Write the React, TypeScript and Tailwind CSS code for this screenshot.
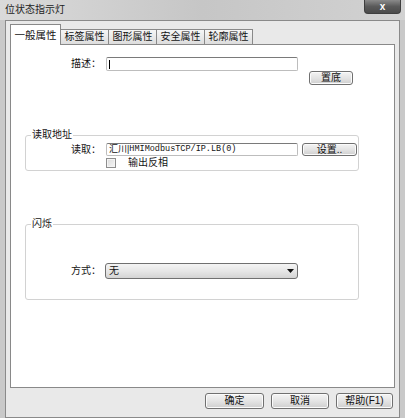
import React from 'react';

const cjk = "font-['Liberation_Sans','Noto_Sans_CJK_SC',sans-serif]";

const btn =
  'flex items-center justify-center rounded-[3px] border border-[#707070] bg-gradient-to-b from-[#f4f4f4] via-[#e4e4e4] to-[#cfcfcf] text-[10px] leading-none text-[#111] shadow-[inset_0_0_0_1px_#fbfbfb]';

function Tab({ label, active }: { label: string; active?: boolean }) {
  if (active) {
    return (
      <div className="relative z-10 -mb-px flex h-[21px] w-[51px] items-center justify-center border border-b-0 border-[#898989] bg-white text-[10.5px] leading-none">
        {label}
      </div>
    );
  }
  return (
    <div className="-ml-px flex h-[15px] w-[49px] items-center justify-center border border-b-0 border-[#898989] bg-gradient-to-b from-[#f6f6f6] to-[#dddddd] text-[10px] leading-none">
      {label}
    </div>
  );
}

function Group({ title, className, children }: { title: string; className: string; children: React.ReactNode }) {
  return (
    <div className={`relative ml-[14px] w-[334px] rounded-[3px] border border-[#d2d2d2] ${className}`}>
      {/* legend sits over the top border */}
      <span className="absolute -top-[7px] left-[5px] bg-white px-[1px] text-[10px] leading-[12px]">{title}</span>
      {children}
    </div>
  );
}

export default function App() {
  return (
    <div className={`flex h-[418px] w-[405px] flex-col overflow-hidden bg-[#c9c9c9] text-[#141414] ${cjk}`}>
      {/* Title bar */}
      <div className="flex h-[20px] bg-gradient-to-r from-[#dadada] via-[#c6c6c6] to-[#d2d2d2]">
        <span className="pl-[5px] pt-[5px] text-[10px] leading-none text-[#222]">位状态指示灯</span>
        <div className="ml-auto mr-[4px] flex h-[14px] w-[37px] items-center justify-center rounded-b-[4px] border border-t-0 border-[#3e3e3e] bg-gradient-to-b from-[#8a8a8a] via-[#5a5a5a] to-[#4a4a4a] text-[10px] font-bold leading-none text-white">
          x
        </div>
      </div>

      {/* Client area */}
      <div className="mx-[5px] flex flex-1 flex-col border border-[#8a8a8a] bg-[#e9e9e9] px-[4px] pt-[3px]">
        <div className="flex items-end">
          <Tab label="一般属性" active />
          <Tab label="标签属性" />
          <Tab label="图形属性" />
          <Tab label="安全属性" />
          <Tab label="轮廓属性" />
        </div>

        <div className="h-[344px] border border-[#898989] bg-white pt-[12px]">
          {/* 描述 */}
          <div className="flex items-center">
            <span className="w-[90px] text-right text-[10px] leading-none">描述：</span>
            <div className="ml-[5px] flex h-[14px] w-[192px] items-center rounded-[2px] border border-[#bdbdbd] border-t-[#7a7a7a] bg-white pl-[2px]">
              <div className="h-[9px] w-px bg-black" />
            </div>
          </div>
          <div className={`${btn} ml-[298px] h-[14px] w-[44px]`}>置底</div>

          <Group title="读取地址" className="mt-[50px] h-[36px]">
            <div className="mt-[7px] flex items-center">
              <span className="w-[75px] text-right text-[10px] leading-none">读取：</span>
              <div className="ml-[5px] flex h-[13px] w-[192px] items-center rounded-[2px] border border-[#bdbdbd] border-t-[#7a7a7a] bg-white pl-[2px] text-[9px] leading-none">
                <span>汇川|</span>
                <span className="font-['Liberation_Mono',monospace] text-[8.5px]">HMIModbusTCP/IP.LB(0)</span>
              </div>
              <div className={`${btn} ml-[4px] h-[13px] w-[55px]`}>设置..</div>
            </div>
            <div className="mt-[2px] flex items-center">
              <div className="ml-[80px] h-[10px] w-[10px] border border-[#8e8e8e] bg-gradient-to-br from-[#dcdcdc] to-[#f6f6f6] shadow-[inset_0_0_0_1px_#f4f4f4]" />
              <span className="ml-[12px] text-[10px] leading-none">输出反相</span>
            </div>
          </Group>

          <Group title="闪烁" className="mt-[53px] h-[76px]">
            <div className="mt-[38px] flex items-center">
              <span className="w-[75px] text-right text-[10px] leading-none">方式：</span>
              <div className="ml-[4px] flex h-[16px] w-[193px] items-center justify-between rounded-[3px] border border-[#707070] bg-gradient-to-b from-[#f4f4f4] via-[#e6e6e6] to-[#d4d4d4] pl-[3px] pr-[3px] text-[10px] leading-none">
                <span>无</span>
                <svg width="7" height="4" viewBox="0 0 7 4">
                  <path d="M0 0H7L3.5 4Z" fill="#111" />
                </svg>
              </div>
            </div>
          </Group>
        </div>

        {/* Dialog buttons */}
        <div className="mt-[5px] flex justify-end gap-[7px] pr-[2px]">
          <div className={`${btn} h-[16px] w-[59px]`}>确定</div>
          <div className={`${btn} h-[16px] w-[58px]`}>取消</div>
          <div className={`${btn} h-[16px] w-[57px]`}>帮助(F1)</div>
        </div>
      </div>
    </div>
  );
}
